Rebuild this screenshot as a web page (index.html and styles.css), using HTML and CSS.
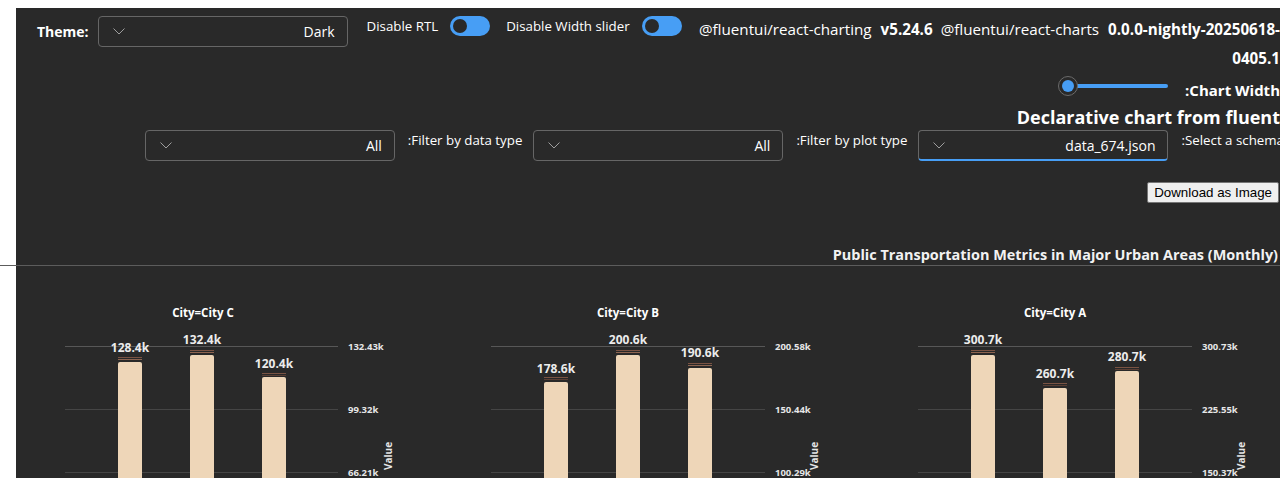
FILE: index.html
```html
<!DOCTYPE html>
<html>
<head>
<meta charset="utf-8">
<link rel="stylesheet" href="styles.css">
</head>
<body>
<div class="page">
  <div class="panel">
    <div class="toprow">
      <div class="theme">
        <span class="theme-label">Theme:</span>
        <div class="dropdown">
          <svg class="chev" width="12" height="7" viewBox="0 0 12 7"><path d="M0.5 0.5 L6 6 L11.5 0.5" fill="none" stroke="#9e9e9e" stroke-width="1"/></svg>
          <span class="dd-val">Dark</span>
        </div>
      </div>
      <div class="sw-group">
        <span class="sw-label">Disable RTL</span>
        <span class="switch"><span class="knob"></span></span>
      </div>
      <div class="sw-group">
        <span class="sw-label">Disable Width slider</span>
        <span class="switch"><span class="knob"></span></span>
      </div>
      <div class="versions"><span>@fluentui/react-charting</span><b class="ver">v5.24.6</b><span>@fluentui/react-charts</span><b class="ver last">0.0.0-nightly-20250618-<br>0405.1</b></div>
    </div>

    <div class="slider-row">
      <div class="slider"><span class="thumb"><span class="thumb-in"></span></span></div>
      <span class="slider-label">:Chart Width</span>
    </div>

    <div class="heading">Declarative chart from fluent</div>

    <div class="filter-row">
      <div class="dropdown">
        <svg class="chev" width="12" height="7" viewBox="0 0 12 7"><path d="M0.5 0.5 L6 6 L11.5 0.5" fill="none" stroke="#9e9e9e" stroke-width="1"/></svg>
        <span class="dd-val">All</span>
      </div>
      <span class="filter-label">:Filter by data type</span>
      <div class="dropdown">
        <svg class="chev" width="12" height="7" viewBox="0 0 12 7"><path d="M0.5 0.5 L6 6 L11.5 0.5" fill="none" stroke="#9e9e9e" stroke-width="1"/></svg>
        <span class="dd-val">All</span>
      </div>
      <span class="filter-label">:Filter by plot type</span>
      <div class="dropdown focused">
        <svg class="chev" width="12" height="7" viewBox="0 0 12 7"><path d="M0.5 0.5 L6 6 L11.5 0.5" fill="none" stroke="#9e9e9e" stroke-width="1"/></svg>
        <span class="dd-val">data_674.json</span>
      </div>
      <span class="filter-label">:Select a schema</span>
    </div>

    <div class="btn-row"><button class="dl-btn">Download as Image</button></div>

    <div class="chart-title">Public Transportation Metrics in Major Urban Areas (Monthly)</div>
    <div class="rule"></div>

    <svg class="plots" width="1264" height="212" viewBox="16 266 1264 212">
      <g class="grid">
        <line x1="65" y1="346.5" x2="338" y2="346.5" class="g-top"/>
        <line x1="65" y1="409.5" x2="338" y2="409.5"/>
        <line x1="65" y1="472.5" x2="338" y2="472.5"/>
        <line x1="491" y1="346.5" x2="765" y2="346.5" class="g-top"/>
        <line x1="491" y1="409.5" x2="765" y2="409.5"/>
        <line x1="491" y1="472.5" x2="765" y2="472.5"/>
        <line x1="918" y1="346.5" x2="1192" y2="346.5" class="g-top"/>
        <line x1="918" y1="409.5" x2="1192" y2="409.5"/>
        <line x1="918" y1="472.5" x2="1192" y2="472.5"/>
      </g>
      <g class="titles">
        <text x="203" y="317">City=City C</text>
        <text x="628" y="317">City=City B</text>
        <text x="1055" y="317">City=City A</text>
      </g>
      <g class="ticks">
        <text x="348" y="350">132.43k</text>
        <text x="348" y="413">99.32k</text>
        <text x="348" y="476">66.21k</text>
        <text x="775" y="350">200.58k</text>
        <text x="775" y="413">150.44k</text>
        <text x="775" y="476">100.29k</text>
        <text x="1202" y="350">300.73k</text>
        <text x="1202" y="413">225.55k</text>
        <text x="1202" y="476">150.37k</text>
      </g>
      <g class="axis-title">
        <text transform="translate(392 456) rotate(-90)">Value</text>
        <text transform="translate(818 456) rotate(-90)">Value</text>
        <text transform="translate(1245 456) rotate(-90)">Value</text>
      </g>
      <g class="stripes">
        <rect x="118" y="357" width="24" height="1" class="s1"/><rect x="118" y="359" width="24" height="1" class="s2"/>
        <rect x="190" y="350" width="24" height="1" class="s1"/><rect x="190" y="352" width="24" height="1" class="s2"/>
        <rect x="262" y="373" width="24" height="1" class="s1"/><rect x="262" y="375" width="24" height="1" class="s3"/>
        <rect x="544" y="377" width="24" height="1" class="s1"/><rect x="544" y="379" width="24" height="1" class="s3"/>
        <rect x="616" y="350" width="24" height="1" class="s1"/><rect x="616" y="352" width="24" height="1" class="s2"/>
        <rect x="688" y="363" width="24" height="1" class="s1"/><rect x="688" y="365" width="24" height="1" class="s2"/>
        <rect x="971" y="350" width="24" height="1" class="s1"/><rect x="971" y="352" width="24" height="1" class="s2"/>
        <rect x="1043" y="383" width="24" height="1" class="s1"/><rect x="1043" y="385" width="24" height="1" class="s3"/>
        <rect x="1115" y="367" width="24" height="1" class="s1"/><rect x="1115" y="369" width="24" height="1" class="s3"/>
      </g>
      <g class="bars">
        <rect x="118" y="362" width="24" height="130" rx="2"/>
        <rect x="190" y="355" width="24" height="130" rx="2"/>
        <rect x="262" y="377" width="24" height="130" rx="2"/>
        <rect x="544" y="382" width="24" height="130" rx="2"/>
        <rect x="616" y="355" width="24" height="130" rx="2"/>
        <rect x="688" y="368" width="24" height="130" rx="2"/>
        <rect x="971" y="355" width="24" height="130" rx="2"/>
        <rect x="1043" y="388" width="24" height="130" rx="2"/>
        <rect x="1115" y="371" width="24" height="130" rx="2"/>
      </g>
      <g class="data-labels">
        <text x="130" y="352">128.4k</text>
        <text x="202" y="344">132.4k</text>
        <text x="274" y="368">120.4k</text>
        <text x="556" y="373">178.6k</text>
        <text x="628" y="344">200.6k</text>
        <text x="700" y="357">190.6k</text>
        <text x="983" y="344">300.7k</text>
        <text x="1055" y="378">260.7k</text>
        <text x="1127" y="361">280.7k</text>
      </g>
    </svg>
  </div>
</div>
</body>
</html>
```

FILE: styles.css
```css
html, body {
  margin: 0;
  padding: 0;
  overflow: hidden;
  background: #ffffff;
}

.page {
  width: 1280px;
  height: 478px;
  padding: 8px 0 0 16px;
  box-sizing: border-box;
}

.panel {
  background: #292929;
  color: #ffffff;
  font-family: "Open Sans", "Noto Sans", sans-serif;
  font-size: 14px;
  height: 470px;
  width: 1264px;
}

/* top row */
.toprow {
  display: flex;
  align-items: flex-start;
  padding: 8px 0 0 21px;
}

.theme {
  display: flex;
  align-items: center;
  gap: 9px;
}

.theme-label {
  font-weight: 700;
  font-size: 14px;
}

.dropdown {
  width: 250px;
  height: 31px;
  box-sizing: border-box;
  border: 1px solid #666666;
  border-radius: 4px;
  display: flex;
  align-items: center;
  justify-content: space-between;
  padding: 0 12px 0 14px;
  flex-shrink: 0;
}

.dropdown.focused {
  border-bottom: 2px solid #479ef5;
}

.dd-val {
  font-size: 14px;
  color: #ffffff;
}

.sw-group {
  display: flex;
  align-items: center;
  gap: 12px;
  margin-left: 19px;
  height: 20px;
  margin-top: 0;
  flex-shrink: 0;
}

.sw-group + .sw-group {
  margin-left: 16px;
}

.sw-label {
  font-size: 13.3px;
}

.switch {
  width: 40px;
  height: 20px;
  border-radius: 10px;
  background: #479ef5;
  display: flex;
  align-items: center;
  padding-left: 3px;
  box-sizing: border-box;
}

.knob {
  width: 14px;
  height: 14px;
  border-radius: 50%;
  background: #292929;
}

.versions {
  flex: 1;
  min-width: 0;
  margin-left: 8px;
  text-align: right;
  white-space: nowrap;
  font-size: 15.2px;
  line-height: 29px;
  margin-top: -1px;
}

.ver {
  font-weight: 700;
  margin: 0 8px 0 9px;
}

.ver.last {
  margin-right: 0;
}

/* slider */
.slider-row {
  display: flex;
  justify-content: flex-end;
  align-items: center;
  gap: 17px;
  margin-top: 0;
  height: 30px;
}

.slider {
  width: 108px;
  height: 4px;
  border-radius: 2px;
  background: #479ef5;
  position: relative;
  margin-top: -4px;
}

.thumb {
  position: absolute;
  left: -2px;
  top: -8px;
  width: 20px;
  height: 20px;
  box-sizing: border-box;
  border-radius: 50%;
  border: 1px solid #6b6b6b;
  background: #292929;
  display: flex;
  align-items: center;
  justify-content: center;
}

.thumb-in {
  width: 12px;
  height: 12px;
  border-radius: 50%;
  background: #479ef5;
}

.slider-label {
  font-weight: 700;
  font-size: 15px;
  padding-top: 3px;
}

.heading {
  text-align: right;
  font-weight: 700;
  font-size: 18px;
  line-height: 26px;
  white-space: nowrap;
  margin-top: 1px;
}

/* filters */
.filter-row {
  display: flex;
  justify-content: flex-end;
  align-items: flex-start;
  margin-right: -4px;
  margin-top: 0;
}

.filter-label {
  font-size: 13.3px;
  margin: 0 11px 0 13px;
  line-height: 20px;
  white-space: nowrap;
}

.filter-label:last-child {
  margin-right: 0;
}

.btn-row {
  display: flex;
  justify-content: flex-end;
  margin-top: 21px;
  padding-right: 1px;
}

.dl-btn {
  font-family: "Liberation Sans", Arial, sans-serif;
  font-size: 13.33px;
  color: #000000;
  background: #efefef;
  border: 1px solid #767676;
  border-radius: 2px;
  padding: 1px 6px;
  height: 21px;
}

.chart-title {
  text-align: right;
  font-weight: 700;
  font-size: 14.45px;
  line-height: 20px;
  margin-top: 42px;
  padding-right: 2px;
  color: #f2f2f2;
}

.rule {
  height: 1px;
  background: #5c5c5c;
  margin-left: -16px;
  margin-top: 0;
}

.plots {
  display: block;
  font-family: "Open Sans", "Noto Sans", sans-serif;
}

.grid line {
  stroke: #454545;
  stroke-width: 1;
}

.grid line.g-top {
  stroke: #575757;
}

.titles text {
  font-size: 11.5px;
  font-weight: 700;
  fill: #ffffff;
  text-anchor: middle;
}

.ticks text {
  font-size: 9.5px;
  font-weight: 700;
  fill: #e6e6e6;
}

.axis-title text {
  font-size: 10px;
  font-weight: 700;
  fill: #e6e6e6;
  text-anchor: middle;
}

.bars rect {
  fill: #eed6b8;
}

.stripes .s1 { fill: #7a5343; }
.stripes .s2 { fill: #8d6450; }
.stripes .s3 { fill: #5a3e33; }

.data-labels text {
  font-size: 12px;
  font-weight: 700;
  fill: #ececec;
  text-anchor: middle;
}
```
